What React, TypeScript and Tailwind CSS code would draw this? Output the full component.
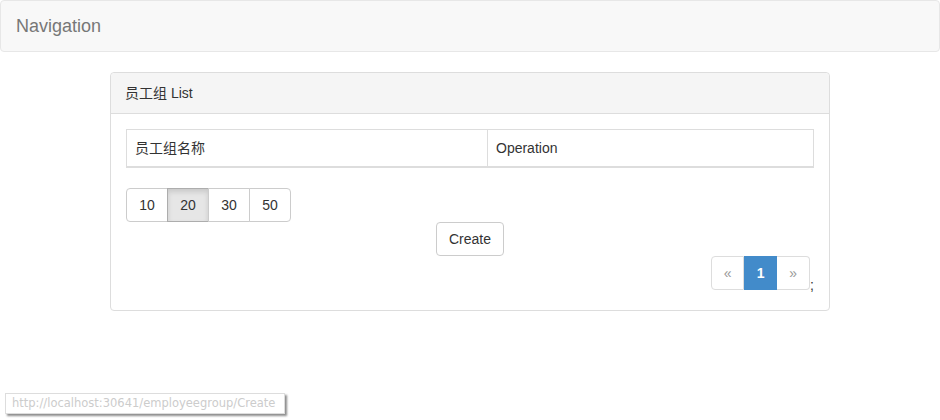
const font = { fontFamily: '"Liberation Sans", Arial, "Noto Sans CJK SC", sans-serif' };

const sizes = ['10', '20', '30', '50'];

export default function App() {
  return (
    <div className="relative h-[420px] w-[940px] bg-white text-sm leading-5 text-[#333]" style={font}>
      <nav className="flex h-[52px] items-center rounded border border-[#e7e7e7] bg-[#f8f8f8] px-[15px]">
        <span className="text-[18px] leading-5 text-[#777]">Navigation</span>
      </nav>

      <div className="mx-auto mt-5 w-[720px] rounded border border-[#ddd] bg-white">
        <div className="h-[41px] rounded-t border-b border-[#ddd] bg-[#f5f5f5] px-[14px] py-[10px]">员工组 List</div>

        <div className="px-[15px] pb-5 pt-[15px]">
          <table className="w-full border-collapse border border-[#ddd]">
            <thead>
              <tr>
                <th className="w-[361px] border border-b-2 border-[#ddd] px-2 py-2 text-left font-normal">员工组名称</th>
                <th className="border border-b-2 border-[#ddd] px-2 py-2 text-left font-normal">Operation</th>
              </tr>
            </thead>
          </table>

          <div className="mt-5 flex">
            {sizes.map((s, i) => (
              <button
                key={s}
                className={`-ml-px h-[34px] w-[42px] border first:ml-0 first:rounded-l last:rounded-r ${
                  i === 1 ? 'border-[#adadad] bg-[#e6e6e6] shadow-[inset_0_3px_5px_rgba(0,0,0,0.125)]' : 'border-[#ccc] bg-white'
                }`}
              >
                {s}
              </button>
            ))}
          </div>

          <div className="flex justify-center">
            <button className="h-[34px] w-[68px] rounded border border-[#ccc] bg-white leading-[18px]">Create</button>
          </div>

          <div className="flex items-end justify-end">
            <ul className="flex">
              <li className="flex h-[34px] w-[33px] items-center justify-center rounded-l border border-[#ddd] text-[#999]">«</li>
              <li className="flex h-[34px] w-[33px] items-center justify-center border border-[#428bca] bg-[#428bca] font-bold text-white">1</li>
              <li className="flex h-[34px] w-[33px] items-center justify-center rounded-r border border-l-0 border-[#ddd] text-[#999]">»</li>
            </ul>
            <span className="-mb-[3px] leading-4">;</span>
          </div>
        </div>
      </div>

      <div
        className="absolute left-[5px] top-[393px] h-[21px] w-[280px] border border-[#ddd] bg-white px-[6px] leading-[19px] text-[#ccc] shadow-[2px_2px_2px_rgba(0,0,0,0.45)]"
        style={{ fontFamily: '"DejaVu Sans", "Liberation Sans", sans-serif', fontSize: '11.5px' }}
      >
        http://localhost:30641/employeegroup/Create
      </div>
    </div>
  );
}
